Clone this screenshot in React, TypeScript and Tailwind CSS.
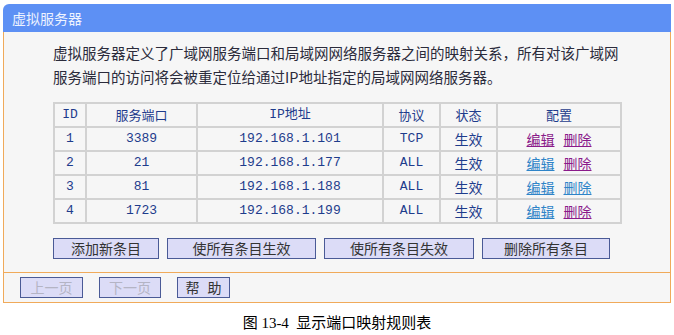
import React from "react";

const cjk = "font-['Noto_Sans_CJK_SC',sans-serif]";
const mono = "font-['Liberation_Mono','Noto_Sans_CJK_SC',monospace]";

type Row = {
  id: number;
  port: string;
  ip: string;
  proto: string;
  editVisited: boolean;
  delVisited: boolean;
};

const rows: Row[] = [
  { id: 1, port: "3389", ip: "192.168.1.101", proto: "TCP", editVisited: true, delVisited: true },
  { id: 2, port: "21", ip: "192.168.1.177", proto: "ALL", editVisited: false, delVisited: true },
  { id: 3, port: "81", ip: "192.168.1.188", proto: "ALL", editVisited: false, delVisited: false },
  { id: 4, port: "1723", ip: "192.168.1.199", proto: "ALL", editVisited: false, delVisited: true },
];

const cell = "border-2 border-[#d2d2d2] h-[24px] p-0 text-center";

const Btn = ({ label, w, disabled }: { label: React.ReactNode; w: string; disabled?: boolean }) => (
  <button
    className={`${w} h-[21px] border border-[#4a5a96] bg-[#dcdcf7] text-[14px] leading-[19px] ${cjk} ${
      disabled ? "text-[#b4b4c4]" : "text-[#333]"
    }`}
  >
    {label}
  </button>
);

export default function App() {
  return (
    <div className="w-[674px] h-[335px] bg-white overflow-hidden">
      <div className="ml-[3px] mt-[4px] w-[668px]">
        {/* title bar */}
        <div className={`h-[28px] rounded-tl-[6px] bg-[#5d90f4] pl-[9px] text-[14px] leading-[28px] text-[#eef3ff] ${cjk}`}>
          虚拟服务器
        </div>

        <div className="border-x border-b border-[#f0aa5a] bg-[#f6f6f6]">
          <div className="pl-[49px] pb-[13px]">
            <p className={`pt-[9px] text-[14.5px] leading-[24px] text-[#2b2b3b] ${cjk}`}>
              虚拟服务器定义了广域网服务端口和局域网网络服务器之间的映射关系，所有对该广域网
              <br />
              服务端口的访问将会被重定位给通过IP地址指定的局域网网络服务器。
            </p>

            <table className={`mt-[13px] border-collapse text-[13px] text-[#1e3c8c] ${mono}`}>
              <thead>
                <tr>
                  <th className={`${cell} w-[32px] font-normal`}>ID</th>
                  <th className={`${cell} w-[111px] font-normal ${cjk}`}>服务端口</th>
                  <th className={`${cell} w-[186px] font-normal`}>IP地址</th>
                  <th className={`${cell} w-[57px] font-normal ${cjk}`}>协议</th>
                  <th className={`${cell} w-[57px] font-normal ${cjk}`}>状态</th>
                  <th className={`${cell} w-[124px] font-normal ${cjk}`}>配置</th>
                </tr>
              </thead>
              <tbody>
                {rows.map((r) => (
                  <tr key={r.id}>
                    <td className={cell}>{r.id}</td>
                    <td className={cell}>{r.port}</td>
                    <td className={cell}>{r.ip}</td>
                    <td className={cell}>{r.proto}</td>
                    <td className={`${cell} text-[14px] ${cjk}`}>生效</td>
                    <td className={`${cell} text-[14px] ${cjk}`}>
                      <span className="inline-flex gap-[9px]">
                        <a className={`underline ${r.editVisited ? "text-[#8a1a8a]" : "text-[#2e84c8]"}`}>编辑</a>
                        <a className={`underline ${r.delVisited ? "text-[#8a1a8a]" : "text-[#2e84c8]"}`}>删除</a>
                      </span>
                    </td>
                  </tr>
                ))}
              </tbody>
            </table>

            <div className="mt-[14px] flex gap-[8px]">
              <Btn label="添加新条目" w="w-[106px]" />
              <Btn label="使所有条目生效" w="w-[149px]" />
              <Btn label="使所有条目失效" w="w-[150px]" />
              <Btn label="删除所有条目" w="w-[128px]" />
            </div>
          </div>

          <div className="flex gap-[16px] border-t border-[#f0aa5a] pl-[16px] pt-[4px] pb-[4px]">
            <Btn label="上一页" w="w-[63px]" disabled />
            <Btn label="下一页" w="w-[62px]" disabled />
            <Btn
              label={
                <span className="flex justify-center gap-[8px]">
                  <span>帮</span>
                  <span>助</span>
                </span>
              }
              w="w-[53px]"
            />
          </div>
        </div>
      </div>

      <div className="mt-[12px] text-center text-[15px] leading-[16px] text-black whitespace-pre font-['Liberation_Serif','Noto_Sans_CJK_SC',serif]">
        图 13-4  显示端口映射规则表
      </div>
    </div>
  );
}
